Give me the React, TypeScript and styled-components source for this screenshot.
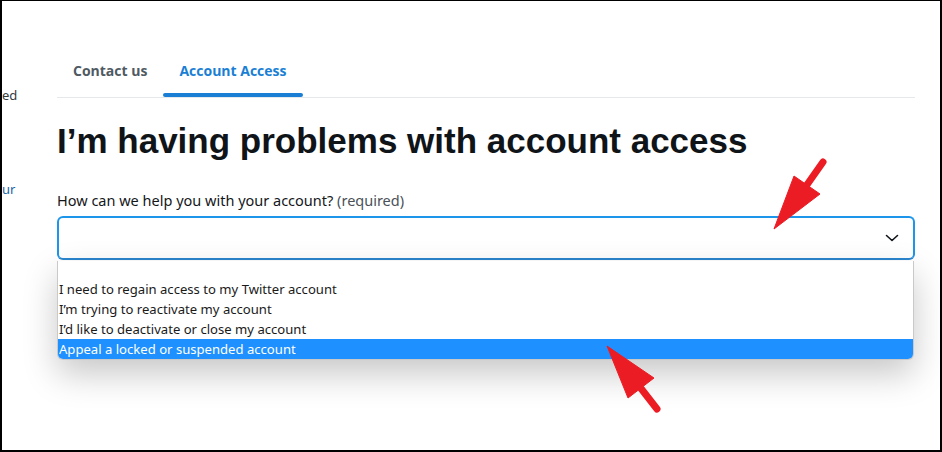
import styled, { createGlobalStyle } from 'styled-components'

const GlobalStyle = createGlobalStyle`
    body {
        margin: 0;
        background: #ffffff;
    }
`

const Frame = styled.div`
    position: relative;
    width: 942px;
    height: 452px;
    box-sizing: border-box;
    border-style: solid;
    border-color: #000000;
    border-width: 1px 2px 2px 2px;
    background: #ffffff;
    overflow: hidden;
    display: grid;
    grid-template-columns: 15px 858px;
    column-gap: 40px;
    font-family: 'Noto Sans', 'Open Sans', sans-serif;
`

// only the tail ends of the left nav links are visible
const Sidebar = styled.div`
    display: flex;
    flex-direction: column;
    align-items: flex-start;
    padding-top: 84px;
    gap: 74px;
`

const SideLink = styled.div<{ link?: boolean }>`
    white-space: nowrap;
    font-size: 13px;
    line-height: 20px;
    color: ${({ link }) => (link ? '#1b63a8' : '#333a40')};
`

const Main = styled.main`
    padding-top: 44px;
    display: flex;
    flex-direction: column;
`

const TabList = styled.div`
    display: flex;
    border-bottom: 1px solid #e6e9eb;
`

const Tab = styled.div<{ active?: boolean }>`
    position: relative;
    height: 52px;
    padding: 0 16px 2px;
    box-sizing: border-box;
    display: flex;
    align-items: center;
    font-family: 'Open Sans', sans-serif;
    font-size: 14px;
    font-weight: 700;
    color: ${({ active }) => (active ? '#1a7fd4' : '#4f5a63')};

    &::after {
        content: '';
        position: absolute;
        left: 0;
        right: 0;
        bottom: 0;
        height: 4px;
        border-radius: 2px;
        background: ${({ active }) => (active ? '#1a7fd4' : 'transparent')};
    }
`

const Heading = styled.h1`
    margin: 23px 0 0;
    font-family: 'Liberation Sans', Arial, sans-serif;
    font-size: 35px;
    line-height: 40px;
    font-weight: 700;
    color: #0f1419;
`

const Label = styled.label`
    margin-top: 29px;
    font-size: 14.5px;
    line-height: 20px;
    color: #14171a;
`

const Hint = styled.span`
    color: #4a5158;
`

const SelectWrap = styled.div`
    position: relative;
    margin-top: 6px;
`

const SelectBox = styled.div`
    height: 44px;
    box-sizing: border-box;
    border: 2px solid #1d95ea;
    border-bottom-color: #2a86cf;
    border-radius: 6px;
    display: flex;
    align-items: center;
    justify-content: flex-end;
    padding-right: 14px;
`

const Options = styled.ul`
    position: absolute;
    top: 45px;
    left: 0;
    right: 1px;
    margin: 0;
    padding: 0;
    list-style: none;
    background: #ffffff;
    border: 1px solid #c9c9c9;
    border-top: none;
    border-radius: 0 0 6px 6px;
    overflow: hidden;
    box-shadow: 0 14px 34px rgba(0, 0, 0, 0.22);
    font-family: 'Noto Sans', sans-serif;
`

const Option = styled.li<{ selected?: boolean; blank?: boolean }>`
    height: ${({ blank }) => (blank ? '18px' : '20px')};
    line-height: 20px;
    padding-left: 1px;
    font-size: 13.1px;
    white-space: nowrap;
    color: ${({ selected }) => (selected ? '#ffffff' : '#1a1a1a')};
    background: ${({ selected }) => (selected ? '#1e90ff' : 'transparent')};
`

const Overlay = styled.svg`
    position: absolute;
    left: 0;
    top: 0;
    pointer-events: none;
`

const options = [
    'I need to regain access to my Twitter account',
    'I\u2019m trying to reactivate my account',
    'I\u2019d like to deactivate or close my account',
    'Appeal a locked or suspended account',
]

function Chevron() {
    return (
        <svg width="14" height="10" viewBox="0 0 14 10">
            <path
                d="M1.5 2.5 L7 7.5 L12.5 2.5"
                fill="none"
                stroke="#0f1419"
                strokeWidth="1.6"
                strokeLinecap="round"
                strokeLinejoin="round"
            />
        </svg>
    )
}

function Arrow({ tail, neck, tip, wingA, wingB }: { tail: number[]; neck: number[]; tip: number[]; wingA: number[]; wingB: number[] }) {
    return (
        <g fill="#ec1c24" stroke="#ec1c24">
            <line x1={tail[0]} y1={tail[1]} x2={neck[0]} y2={neck[1]} strokeWidth="7" strokeLinecap="round" />
            <polygon points={`${tip.join(',')} ${wingA.join(',')} ${wingB.join(',')}`} strokeWidth="1" strokeLinejoin="round" />
        </g>
    )
}

export default function App() {
    return (
        <>
            <GlobalStyle />
            <Frame>
                <Sidebar>
                    <SideLink>ed</SideLink>
                    <SideLink link>ur</SideLink>
                </Sidebar>
                <Main>
                    <TabList>
                        <Tab>Contact us</Tab>
                        <Tab active>Account Access</Tab>
                    </TabList>
                    <Heading>I’m having problems with account access</Heading>
                    <Label>
                        How can we help you with your account? <Hint>(required)</Hint>
                    </Label>
                    <SelectWrap>
                        <SelectBox>
                            <Chevron />
                        </SelectBox>
                        <Options>
                            <Option blank />
                            {options.map((o, i) => (
                                <Option key={o} selected={i === options.length - 1}>
                                    {o}
                                </Option>
                            ))}
                        </Options>
                    </SelectWrap>
                </Main>
                <Overlay width="942" height="452" viewBox="0 0 942 452">
                    <Arrow tail={[821, 161]} neck={[802, 188]} tip={[772, 228]} wingA={[792, 175]} wingB={[818, 193]} />
                    <Arrow tail={[655, 408]} neck={[634, 381]} tip={[605, 345]} wingA={[626, 397]} wingB={[652, 377]} />
                </Overlay>
            </Frame>
        </>
    )
}
